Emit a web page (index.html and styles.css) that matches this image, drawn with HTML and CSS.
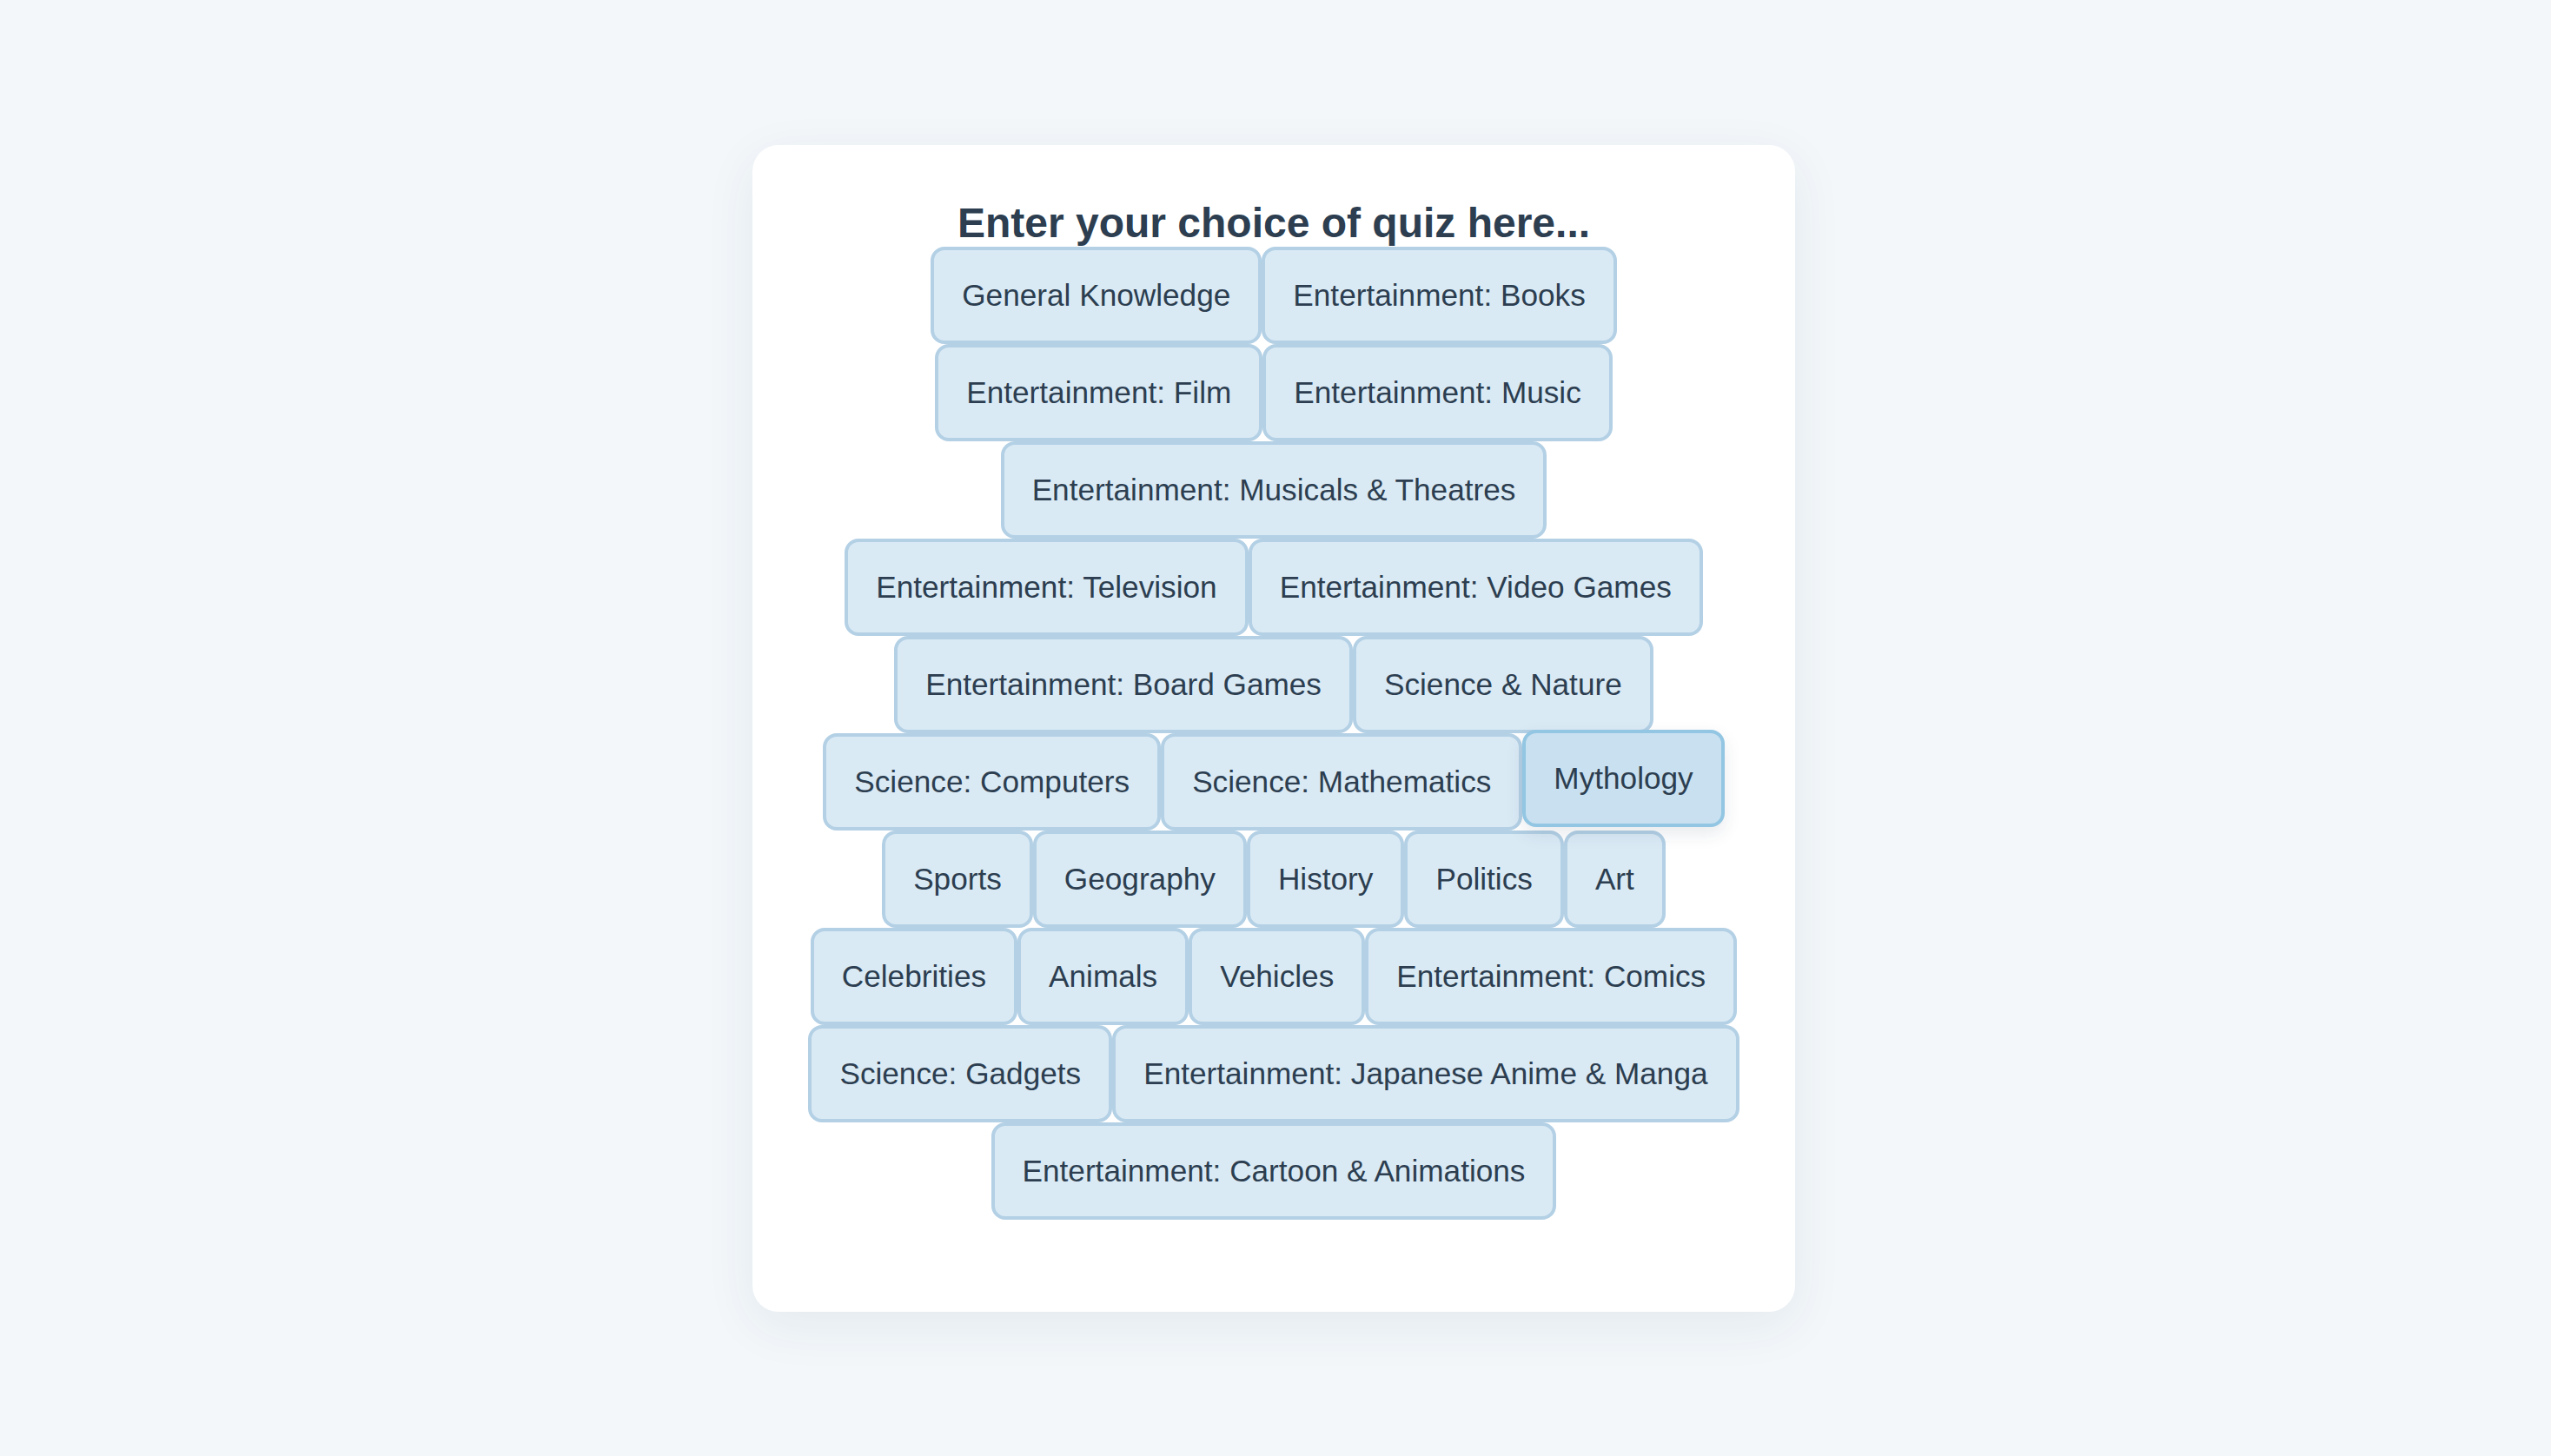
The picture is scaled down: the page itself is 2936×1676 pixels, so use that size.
FILE: index.html
```html
<!DOCTYPE html>
<html lang="en">
<head>
<meta charset="utf-8">
<title>Quiz</title>
<link rel="stylesheet" href="styles.css">
</head>
<body>
<main class="card">
  <h2 class="title">Enter your choice of quiz here...</h2>
  <div class="choices">
    <button class="choice">General Knowledge</button>
    <button class="choice">Entertainment: Books</button>
    <button class="choice">Entertainment: Film</button>
    <button class="choice">Entertainment: Music</button>
    <button class="choice">Entertainment: Musicals &amp; Theatres</button>
    <button class="choice">Entertainment: Television</button>
    <button class="choice">Entertainment: Video Games</button>
    <button class="choice">Entertainment: Board Games</button>
    <button class="choice">Science &amp; Nature</button>
    <button class="choice">Science: Computers</button>
    <button class="choice">Science: Mathematics</button>
    <button class="choice choice-hover">Mythology</button>
    <button class="choice">Sports</button>
    <button class="choice">Geography</button>
    <button class="choice">History</button>
    <button class="choice">Politics</button>
    <button class="choice">Art</button>
    <button class="choice">Celebrities</button>
    <button class="choice">Animals</button>
    <button class="choice">Vehicles</button>
    <button class="choice">Entertainment: Comics</button>
    <button class="choice">Science: Gadgets</button>
    <button class="choice">Entertainment: Japanese Anime &amp; Manga</button>
    <button class="choice">Entertainment: Cartoon &amp; Animations</button>
  </div>
</main>
</body>
</html>
```
FILE: styles.css
```css
* {
  box-sizing: border-box;
}

html, body {
  margin: 0;
  padding: 0;
}

body {
  min-height: 100vh;
  padding-right: 4px;
  background: #f3f7fa;
  font-family: "Liberation Sans", Arial, Helvetica, sans-serif;
  color: #2c3e50;
  display: flex;
  align-items: center;
  justify-content: center;
}

.card {
  width: 1200px;
  background: #ffffff;
  border-radius: 30px;
  padding: 62px 60px 106px;
  box-shadow: 0 16px 60px rgba(30, 50, 80, 0.07);
}

.title {
  margin: 0;
  font-size: 48px;
  font-weight: bold;
  line-height: 55px;
  text-align: center;
  color: #2c3e50;
}

.choices {
  display: flex;
  flex-wrap: wrap;
  justify-content: center;
}

.choice {
  margin: 0;
  padding: 32px;
  font-family: "Liberation Sans", Arial, Helvetica, sans-serif;
  font-size: 35.2px;
  line-height: 40px;
  color: #2c3e50;
  background: #daeaf5;
  border: 4px solid #b3d0e5;
  border-radius: 16px;
  cursor: pointer;
  white-space: nowrap;
}

.choice-hover {
  background: #c9e0f0;
  border-color: #93c6e2;
  transform: translateY(-4px);
  box-shadow: 0 8px 20px rgba(30, 50, 80, 0.1);
}
```
